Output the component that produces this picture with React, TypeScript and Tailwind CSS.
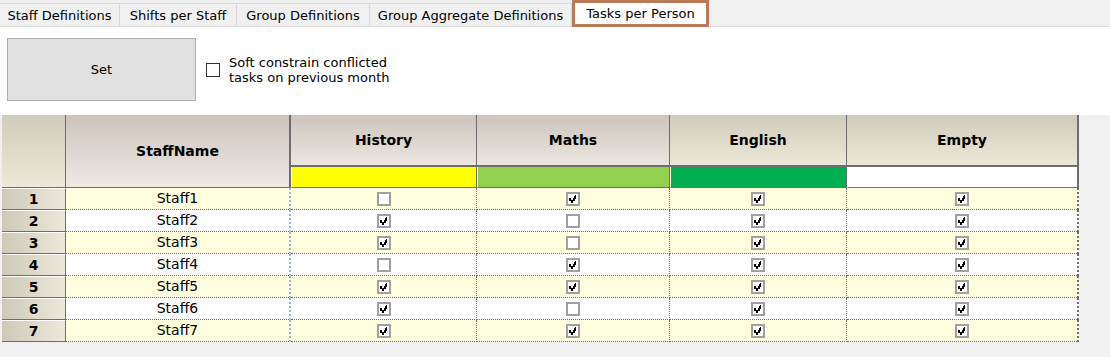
import React from 'react'

const tabs = [
  { label: 'Staff Definitions', w: 'w-[120px]' },
  { label: 'Shifts per Staff', w: 'w-[117px]' },
  { label: 'Group Definitions', w: 'w-[133px]' },
  { label: 'Group Aggregate Definitions', w: 'w-[202px]' },
]

const rows: { name: string; checks: boolean[] }[] = [
  { name: 'Staff1', checks: [false, true, true, true] },
  { name: 'Staff2', checks: [true, false, true, true] },
  { name: 'Staff3', checks: [true, false, true, true] },
  { name: 'Staff4', checks: [false, true, true, true] },
  { name: 'Staff5', checks: [true, true, true, true] },
  { name: 'Staff6', checks: [true, false, true, true] },
  { name: 'Staff7', checks: [true, true, true, true] },
]

// widths of the four task columns, the last one carries the thick right edge
const taskCols = [
  { w: 'w-[186px]', border: 'border-r border-dotted border-[#6d6d6d]' },
  { w: 'w-[193px]', border: 'border-r border-dotted border-[#6d6d6d]' },
  { w: 'w-[177px]', border: 'border-r border-dotted border-[#6d6d6d]' },
  { w: 'w-[232px]', border: 'border-r-2 border-dotted border-[#6d6d6d]' },
]

function GridCheck({ checked }: { checked: boolean }) {
  return (
    <svg width="14" height="14" viewBox="0 0 14 14" className="block" shapeRendering="crispEdges">
      <rect x="1" y="1" width="12" height="12" fill="#fff" stroke="#a0a0a0" strokeWidth="2" />
      {checked && (
        <g fill="#000">
          <rect x="3" y="6" width="2" height="3" />
          <rect x="5" y="8" width="2" height="3" />
          <rect x="7" y="6" width="2" height="3" />
          <rect x="8" y="4" width="2" height="3" />
          <rect x="9" y="3" width="1" height="2" />
        </g>
      )}
    </svg>
  )
}

export default function App() {
  const uiFont = { fontFamily: '"DejaVu Sans", "Noto Sans CJK JP", sans-serif' }

  return (
    <div className="w-[1110px] h-[357px] bg-white flex flex-col overflow-hidden text-black" style={uiFont}>
      {/* Tab strip */}
      <div className="h-[27px] flex bg-[#f0f0f0] border-b border-[#d9d9d9] shrink-0">
        {tabs.map((t) => (
          <div
            key={t.label}
            className={`${t.w} mt-[3px] h-[23px] flex items-center justify-center border-t border-r border-[#d9d9d9] text-[13px] leading-none`}
          >
            {t.label}
          </div>
        ))}
        <div className="w-[137px] h-[27px] border-[3px] border-[#b97a57] bg-white flex items-start justify-center pt-[3px] text-[13px] leading-[15px]">
          Tasks per Person
        </div>
      </div>

      {/* Options */}
      <div className="h-[88px] flex items-center pl-[7px] pb-[3px] shrink-0">
        <button className="w-[189px] h-[63px] bg-[#e1e1e1] border border-[#adadad] text-[13px]">Set</button>
        <div className="ml-[10px] w-[14px] h-[14px] border border-[#333] bg-white" />
        <div className="ml-[9px] text-[13px] leading-[15px]">
          Soft constrain conflicted
          <br />
          tasks on previous month
        </div>
      </div>

      {/* Grid */}
      <div className="flex-1 bg-[#f0f0f0] pl-[2px]">
        {/* Header */}
        <div className="flex h-[73px] text-[14px]">
          <div className="w-[64px] h-full bg-gradient-to-b from-[#cfccbc] to-[#ece9d9] border-r border-b border-[#6d6d6d]" />
          <div className="w-[225px] h-full bg-gradient-to-b from-[#ccc4bc] to-[#efe8e3] border-r-2 border-b border-[#6d6d6d] flex items-center justify-center font-bold">
            StaffName
          </div>
          {[
            { label: 'History', color: 'bg-[#ffff00]', head: 'from-[#ccc4bc] to-[#ede6e0]' },
            { label: 'Maths', color: 'bg-[#92d050]', head: 'from-[#ccc4bc] to-[#ede6e0]' },
            { label: 'English', color: 'bg-[#00b050]', head: 'from-[#cfccbc] to-[#ece8d8]' },
            { label: 'Empty', color: 'bg-white', head: 'from-[#cfccbc] to-[#ece8d8]' },
          ].map((c, i) => (
            <div key={c.label} className={`${taskCols[i].w} h-full flex flex-col`}>
              <div
                className={`h-[52px] bg-gradient-to-b ${c.head} border-b-2 border-[#6d6d6d] ${
                  i === 3 ? 'border-r-2' : 'border-r'
                } flex items-center justify-center font-bold`}
              >
                {c.label}
              </div>
              <div
                className={`h-[21px] ${c.color} border-b border-[#6d6d6d] ${
                  i === 3 ? 'border-r-2' : 'border-r'
                } border-r-[#6d6d6d] border-l border-l-white`}
              />
            </div>
          ))}
        </div>

        {/* Body rows */}
        {rows.map((r, idx) => {
          const bg = idx % 2 === 0 ? 'bg-[#ffffe0]' : 'bg-white'
          return (
            <div key={r.name} className="flex h-[22px] text-[14px]">
              <div className="w-[64px] h-full bg-gradient-to-r from-[#cdc9b8] to-[#ece9da] border-r border-b border-[#6d6d6d] border-t border-t-white flex items-center justify-center font-bold">
                {idx + 1}
              </div>
              <div
                className={`w-[225px] h-full ${bg} border-b border-dotted border-b-[#6d6d6d] border-r-2 border-r-[#9ab5d8] flex items-center justify-center`}
              >
                {r.name}
              </div>
              {r.checks.map((c, i) => (
                <div
                  key={i}
                  className={`${taskCols[i].w} h-full ${bg} border-b border-dotted border-b-[#6d6d6d] ${taskCols[i].border} flex items-center justify-center`}
                >
                  <GridCheck checked={c} />
                </div>
              ))}
            </div>
          )
        })}
      </div>
    </div>
  )
}
